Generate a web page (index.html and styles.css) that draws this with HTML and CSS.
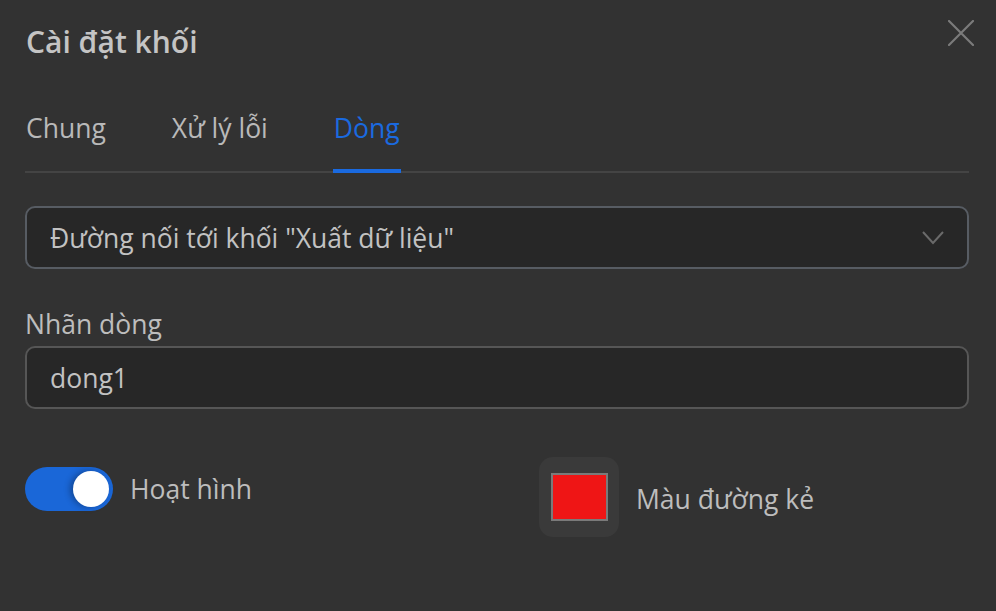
FILE: index.html
```html
<!DOCTYPE html>
<html lang="vi">
<head>
  <meta charset="utf-8">
  <title>Cài đặt khối</title>
  <link rel="stylesheet" href="styles.css">
</head>
<body>
  <div class="dialog">
    <div class="header">
      <h2>Cài đặt khối</h2>
      <button class="close" aria-label="Đóng">
        <svg width="26" height="26" viewBox="0 0 26 26">
          <path d="M1 1 L25 25 M25 1 L1 25" stroke="#7b7b7b" stroke-width="2.2" stroke-linecap="round" fill="none"/>
        </svg>
      </button>
    </div>

    <div class="tabs">
      <div class="tab">Chung</div>
      <div class="tab">Xử lý lỗi</div>
      <div class="tab active">Dòng</div>
    </div>

    <div class="select">
      <span>Đường nối tới khối "Xuất dữ liệu"</span>
      <svg width="22" height="14" viewBox="0 0 22 14">
        <path d="M1 1 L11 12 L21 1" stroke="#6a6a6a" stroke-width="2" fill="none"/>
      </svg>
    </div>

    <label class="label">Nhãn dòng</label>
    <div class="input">dong1</div>

    <div class="options">
      <div class="option toggle">
        <div class="switch"><div class="knob"></div></div>
        <span>Hoạt hình</span>
      </div>
      <div class="option color">
        <div class="swatch"><div class="red"></div></div>
        <span>Màu đường kẻ</span>
      </div>
    </div>
  </div>
</body>
</html>
```

FILE: styles.css
```css
html, body {
  margin: 0;
  height: 100%;
  background: #323232;
}

body {
  font-family: "Open Sans", "Noto Sans", sans-serif;
  color: #bdbdbd;
}

.dialog {
  padding: 0 27px 0 25px;
}

.header {
  display: flex;
  justify-content: space-between;
  align-items: flex-start;
  height: 82px;
}

h2 {
  margin: 22px 0 0 1px;
  font-size: 30px;
  font-weight: 600;
  line-height: 40px;
  color: #c4c4c4;
}

.close {
  background: none;
  border: 0;
  padding: 0;
  margin: 20px -5px 0 0;
}

.tabs {
  display: flex;
  gap: 64px;
  border-bottom: 2px solid #444;
  height: 89px;
}

.tab {
  font-size: 26.5px;
  line-height: 36px;
  padding: 28px 1px 0;
  color: #b9b9b9;
  box-sizing: border-box;
}

.tab.active {
  color: #1a6ae0;
  border-bottom: 4px solid #1a6ae0;
  margin-bottom: -2px;
}

.select, .input {
  box-sizing: border-box;
  height: 63px;
  border-radius: 10px;
  background: #272727;
  font-size: 26.5px;
  color: #c2c2c2;
  padding: 0 23px;
  display: flex;
  align-items: center;
}

.select {
  margin-top: 33px;
  border: 2px solid #575c63;
  justify-content: space-between;
}

.label {
  display: block;
  margin-top: 38px;
  font-size: 26.5px;
  line-height: 34px;
  color: #bdbdbd;
}

.input {
  margin-top: 5px;
  border: 2px solid #565656;
}

.options {
  display: grid;
  grid-template-columns: 514px 1fr;
  align-items: start;
  margin-top: 48px;
}

.option {
  display: flex;
  align-items: center;
  gap: 17px;
  font-size: 26.5px;
  color: #bdbdbd;
}

.toggle {
  margin-top: 10px;
}

.switch {
  width: 88px;
  height: 44px;
  border-radius: 22px;
  background: #1a67d8;
  display: flex;
  align-items: center;
  justify-content: flex-end;
  padding-right: 4px;
  box-sizing: border-box;
}

.knob {
  width: 36px;
  height: 36px;
  border-radius: 50%;
  background: #fff;
  box-shadow: -3px 0 6px rgba(0, 0, 0, 0.3);
}

.swatch {
  width: 80px;
  height: 80px;
  border-radius: 14px;
  background: #3a3a3a;
  display: flex;
  align-items: center;
  justify-content: center;
}

.red {
  width: 57px;
  height: 48px;
  box-sizing: border-box;
  border: 2px solid #7a7a7a;
  background: #ef1515;
}

.color span {
  margin-top: 4px;
}
```
